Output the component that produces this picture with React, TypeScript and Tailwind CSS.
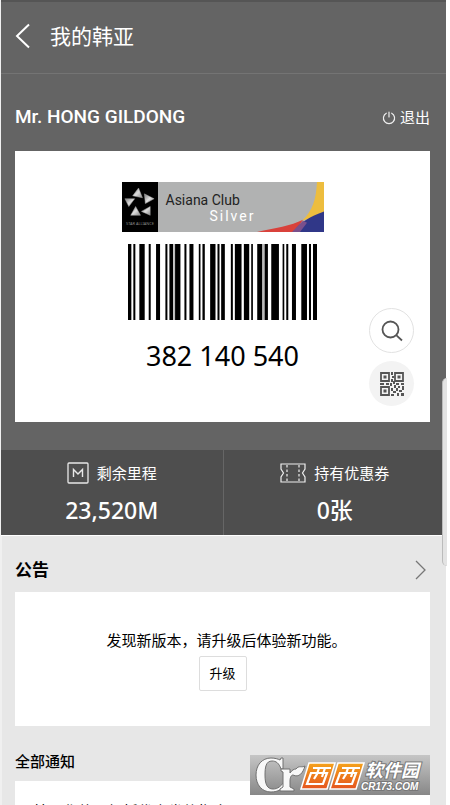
import React from 'react';

// [x, width] of every black bar
const bars: [number, number][] = [
  [0, 10], [16, 6], [34, 16], [62, 6], [84, 12], [112, 6], [124, 11], [141, 16],
  [169, 6], [184, 12], [212, 5], [223, 7], [246, 16], [268, 6], [279, 11],
  [308, 6], [320, 20], [347, 16], [369, 5], [387, 15], [409, 10], [429, 23],
  [463, 5], [474, 6], [491, 12], [519, 17], [542, 6], [554, 12],
];

function AllianceLogo() {
  return (
    <svg viewBox="0 0 37 49" className="h-full w-9 shrink-0 bg-black" aria-hidden="true">
      <defs>
        <linearGradient id="chrome" x1="0" y1="0" x2="1" y2="1">
          <stop offset="0" stopColor="#777" />
          <stop offset="0.5" stopColor="#ddd" />
          <stop offset="1" stopColor="#888" />
        </linearGradient>
      </defs>
      <g fill="url(#chrome)" stroke="#aaa" strokeWidth="0.500">
        <path d="M17 5 21 15 11 13Z" />
        <path d="M23 11 33 16 24 21Z" />
        <path d="M29 24 29 33 20 29Z" />
        <path d="M14 24 19 33 9 33Z" />
        <path d="M3 16 13 16 7 24Z" />
      </g>
      <text x="18.500" y="43" textAnchor="middle" fontSize="4" fill="#888">STAR ALLIANCE</text>
    </svg>
  );
}

function MembershipBadge() {
  return (
    <div className="relative flex h-[50px] w-[202px] overflow-hidden bg-[#b1b2b2]">
      <AllianceLogo />
      <svg viewBox="0 0 67 49" className="absolute right-0 top-0 h-full w-[67px]" preserveAspectRatio="none" aria-hidden="true">
        <path d="M60 0H67V31L45 38C56 28 59 17 60 0Z" fill="#edbd3e" />
        <path d="M0 49C18 45 34 43 46 37L38 49Z" fill="#d9413b" />
        <path d="M37 49C42 40 53 34 67 29V49Z" fill="#303788" />
        <path d="M35 49 46 38 50 40 43 49Z" fill="#79508c" />
      </svg>
      <div className="relative pl-2 pt-2 font-['Roboto',sans-serif]">
        <p className="text-sm leading-5 text-[#222]">Asiana Club</p>
        <p className="pl-11 text-sm leading-3 tracking-[2px] text-white">Silver</p>
      </div>
    </div>
  );
}

function Barcode() {
  return (
    <svg viewBox="0 0 566 228" preserveAspectRatio="none" className="mt-3 h-[76px] w-[189px]" role="img" aria-label="382 140 540">
      <path d="M136 0H141V228H136ZM403 0H408V228H403Z" fill="#bbb" />
      {bars.map(([x, w]) => (
        <rect key={x} x={x} y="0" width={w} height="228" fill="#000" />
      ))}
    </svg>
  );
}

function QrIcon() {
  return (
    <svg viewBox="0 0 24 24" className="h-6 w-6" aria-hidden="true">
      <g fill="none" stroke="#555" strokeWidth="1.800">
        <path d="M1 1H9V9H1ZM15 1H23V9H15ZM1 15H9V23H1Z" />
      </g>
      <g fill="#555">
        <path d="M3.500 3.500H6.500V6.500H3.500ZM17.500 3.500H20.500V6.500H17.500ZM3.500 17.500H6.500V20.500H3.500Z" />
        <path d="M11 0H13V3H11ZM12 4H14V6H12ZM11 7H13V10H11ZM0 11H4V13H0ZM6 11H9V13H6ZM10 11H12V14H10ZM13 9H15V12H13ZM16 11H19V13H16ZM21 11H24V13H21Z" />
        <path d="M11 16H13V19H11ZM14 13H16V16H14ZM18 14H20V16H18ZM22 14H24V18H22ZM16 16H18V19H16ZM19 18H22V20H19ZM13 19H16V21H13ZM11 22H14V24H11ZM17 21H19V24H17ZM21 21H24V24H21Z" />
      </g>
    </svg>
  );
}

function MileageIcon() {
  return (
    <svg viewBox="0 0 22 22" className="h-[22px] w-[22px]" fill="none" stroke="#e8e8e8" aria-hidden="true">
      <rect x="1" y="1" width="20" height="20" rx="1" strokeWidth="1.300" />
      <path d="M6.500 15V7.500L11 12 15.500 7.500V15" strokeWidth="1.400" />
    </svg>
  );
}

function CouponIcon() {
  return (
    <svg viewBox="0 0 26 20" className="h-5 w-[26px]" fill="none" stroke="#eee" strokeWidth="1.200" aria-hidden="true">
      <path d="M1 1H25V6L22.500 10 25 14V19H1V14L3.500 10 1 6Z" />
      <path d="M7 2V18M19 2V18" strokeDasharray="2.500 2" />
    </svg>
  );
}

function SiteMark() {
  return (
    <div className="absolute bottom-[10px] right-5 h-10 w-[180px] bg-linear-to-b from-[#c6c6c6] to-[#888]">
      <svg viewBox="0 0 180 40" className="h-full w-full" role="img" aria-label="西西软件园 CR173.COM">
        <defs>
          <linearGradient id="flame" x1="0" y1="0" x2="0" y2="1">
            <stop offset="0" stopColor="#f5a31b" />
            <stop offset="1" stopColor="#e5541f" />
          </linearGradient>
        </defs>
        <g fill="#f8f8f8" stroke="#707070" strokeWidth="1" strokeLinejoin="round">
          <path d="M33 3V14H31C29 8 26 6 22 6 16 6 15 12 15 20 15 29 17 34 23 34 28 34 31 31 34 27L36 29C33 34 28 37 21 37 12 37 6 30 6 20 6 10 12 3 21 3 25 3 28 4 30 5L31 3Z" />
          <path d="M31 14H40V18C42 15 44 14 46 14 49 10 52 13 55 11 53 18 49 23 43 20 41 20 40 23 40 26V32L44 34V36H30V34L33 32V17L31 16Z" />
        </g>
        <path d="M59 8H85L77 34H51ZM88 8H114L106 34H80Z" fill="url(#flame)" stroke="#fff" strokeWidth="1.500" />
        <path
          d="M63 13H81M61 18H77L73 29H57ZM69 13 67 19 64 24M75 13 72 22M92 13H110M90 18H106L102 29H86ZM98 13 96 19 93 24M104 13 101 22"
          fill="none"
          stroke="#fff"
          strokeWidth="2.200"
        />
        <g fill="#fff" stroke="#777" strokeWidth="2" paintOrder="stroke" fontStyle="italic" fontWeight="700">
          <text x="115" y="22" fontSize="18" fontFamily="Noto Sans CJK SC, sans-serif">软件园</text>
          <text x="111" y="35" fontSize="10" fontFamily="Liberation Sans, sans-serif">CR173.COM</text>
        </g>
      </svg>
    </div>
  );
}

export default function App() {
  return (
    <div className="relative h-screen overflow-hidden bg-white pr-1 font-['Noto_Sans','Noto_Sans_CJK_SC',sans-serif]">
      <div className="h-full border-l-2 border-[#f0f0f0] bg-[#e7e7e7]">
        <div className="-ml-px border-t-2 border-[#555] bg-[#646464] text-white">
          <header className="flex h-[72px] items-center gap-5 border-b border-[#747474] pb-1 pl-[14px]">
            <button aria-label="返回">
              <svg viewBox="0 0 15 26" className="h-[26px] w-[15px]" fill="none" stroke="#fff" strokeWidth="2" aria-hidden="true">
                <path d="M14 1.500 2 13 14 24.500" />
              </svg>
            </button>
            <h1 className="text-[21px] leading-7">我的韩亚</h1>
          </header>

          <section className="pb-7 pl-[14px] pr-4">
            <div className="flex h-[77px] items-center justify-between pt-[10px]">
              <h2 className="font-['Roboto',sans-serif] text-[19px] font-medium">Mr. HONG GILDONG</h2>
              <button className="flex items-center gap-1 text-[15px]">
                <svg viewBox="0 0 14 14" className="h-[14px] w-[14px]" fill="none" stroke="#eee" strokeWidth="1.200" strokeLinecap="round" aria-hidden="true">
                  <path d="M7 1V6M4.300 2.200A5.600 5.600 0 1 0 9.700 2.200" />
                </svg>
                退出
              </button>
            </div>

            <div className="relative flex h-[271px] flex-col items-center bg-white pt-[31px] text-black">
              <MembershipBadge />
              <Barcode />
              <p className="mt-4 text-[27px] leading-10">382 140 540</p>
              <div className="absolute bottom-4 right-4 flex flex-col gap-2">
                <button aria-label="放大" className="flex h-[45px] w-[45px] items-center justify-center rounded-full border border-[#e2e2e2] bg-white">
                  <svg viewBox="0 0 22 22" className="h-[22px] w-[22px]" fill="none" stroke="#555" strokeWidth="1.800" aria-hidden="true">
                    <circle cx="9.500" cy="9.500" r="8" />
                    <path d="M15.200 15.200 21 20.500" />
                  </svg>
                </button>
                <button aria-label="二维码" className="flex h-[45px] w-[45px] items-center justify-center rounded-full bg-[#f3f3f3]">
                  <QrIcon />
                </button>
              </div>
            </div>
          </section>

          <section className="grid h-[86px] grid-cols-2 divide-x divide-[#666] border-b border-white bg-[#4e4e4e] text-center">
            <div className="pt-3">
              <div className="flex h-[22px] items-center justify-center gap-2">
                <MileageIcon />
                <span className="text-[15px]">剩余里程</span>
              </div>
              <p className="mt-[10px] text-[23px] font-medium leading-8">23,520M</p>
            </div>
            <div className="pt-3">
              <div className="flex h-[22px] items-center justify-center gap-2">
                <CouponIcon />
                <span className="text-[15px]">持有优惠券</span>
              </div>
              <p className="mt-[10px] text-[23px] font-medium leading-8">0张</p>
            </div>
          </section>
        </div>

        <main className="pl-[13px] pr-4 text-black">
          <div className="flex h-14 items-center justify-between pt-3">
            <h3 className="text-[17px] font-bold">公告</h3>
            <a href="#notices" aria-label="更多公告" className="pr-1">
              <svg viewBox="0 0 11 20" className="h-5 w-[11px]" fill="none" stroke="#777" strokeWidth="1.300" aria-hidden="true">
                <path d="M1 1 10 10 1 19" />
              </svg>
            </a>
          </div>
          <div className="flex h-[134px] flex-col items-center bg-white pt-9">
            <p className="pl-2 text-[15px] leading-6">发现新版本，请升级后体验新功能。</p>
            <button className="mt-1 h-[35px] w-12 rounded-xs border border-[#ddd] text-[13px]">升级</button>
          </div>
          <h3 id="notices" className="flex h-[55px] items-center pt-4 text-[15px] font-medium">全部通知</h3>
          <div className="bg-white px-[18px] pt-[18px] pb-10 text-[15px] leading-6">
            韩国化妆品打折优惠券的指南
          </div>
        </main>
      </div>

      {/* edge panel handle */}
      <div className="absolute right-[3px] top-[378px] h-[188px] w-[5px] rounded-l-md border-l border-[#bbb] bg-[#e3e3e3]" />
      <SiteMark />
    </div>
  );
}
